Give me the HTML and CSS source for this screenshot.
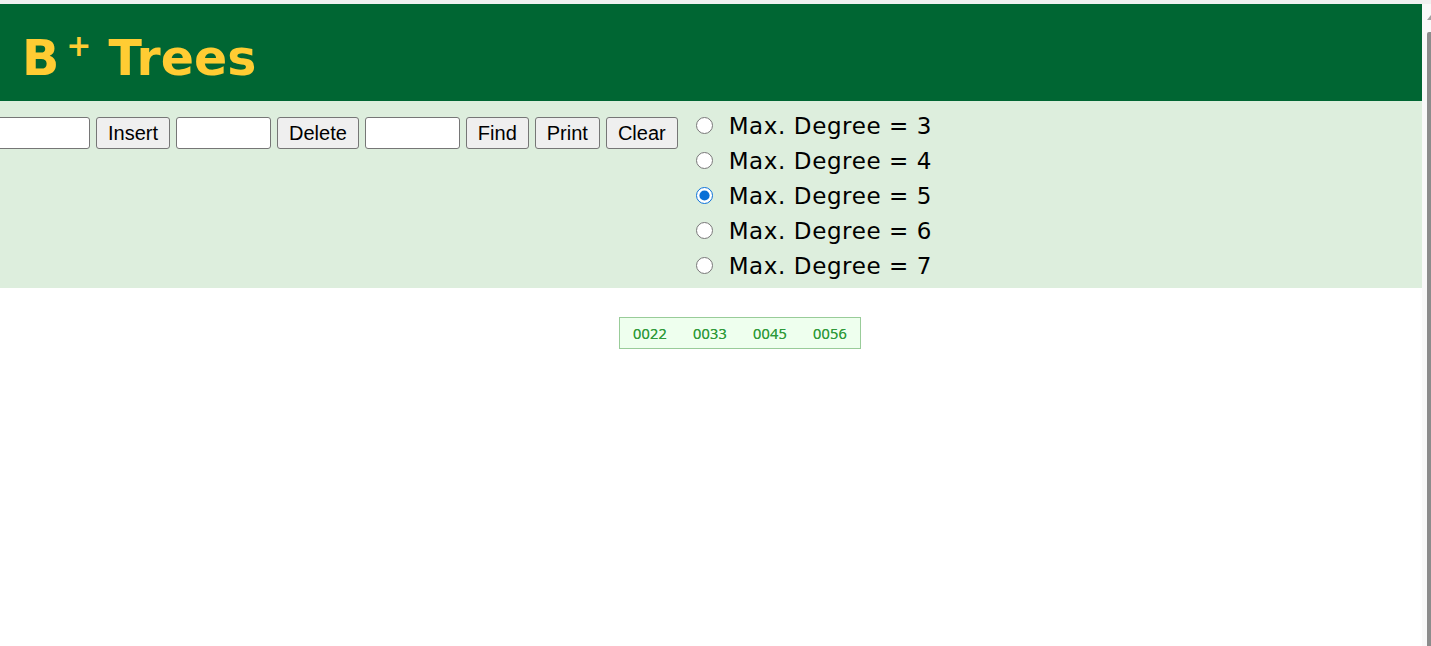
FILE: index.html
```html
<!DOCTYPE html>
<html>
<head>
<meta charset="utf-8">
<title>B+ Trees</title>
<link rel="stylesheet" href="styles.css">
</head>
<body>
<div class="window">
  <div class="topbar"></div>
  <div class="viewport">
    <main class="page">
      <header class="banner">
        <h1 class="title">B<sup class="plus">+</sup> Trees</h1>
      </header>
      <section class="controls">
        <div class="actions">
          <input class="field" type="text">
          <button class="btn">Insert</button>
          <input class="field" type="text">
          <button class="btn">Delete</button>
          <input class="field" type="text">
          <button class="btn">Find</button>
          <button class="btn">Print</button>
          <button class="btn">Clear</button>
        </div>
        <div class="degrees">
          <label class="degree"><input class="radio" type="radio" name="deg"><span>Max. Degree = 3</span></label>
          <label class="degree"><input class="radio" type="radio" name="deg"><span>Max. Degree = 4</span></label>
          <label class="degree"><input class="radio" type="radio" name="deg" checked><span>Max. Degree = 5</span></label>
          <label class="degree"><input class="radio" type="radio" name="deg"><span>Max. Degree = 6</span></label>
          <label class="degree"><input class="radio" type="radio" name="deg"><span>Max. Degree = 7</span></label>
        </div>
      </section>
      <section class="canvas">
        <div class="node">
          <span class="key">0022</span>
          <span class="key">0033</span>
          <span class="key">0045</span>
          <span class="key">0056</span>
        </div>
      </section>
    </main>
    <div class="scrollbar">
      <span class="arrow"></span>
      <span class="thumb"></span>
    </div>
  </div>
</div>
</body>
</html>
```

FILE: styles.css
```css
html, body {
  margin: 0;
  padding: 0;
  background: #ffffff;
  overflow: hidden;
}

.window {
  width: 1431px;
  height: 646px;
  display: flex;
  flex-direction: column;
}

.topbar {
  height: 4px;
  background: #f0f0f0;
  flex: none;
}

.viewport {
  flex: 1;
  display: flex;
  min-height: 0;
}

.page {
  width: 1422px;
  flex: none;
  overflow: hidden;
}

.banner {
  background: #006633;
  height: 97px;
  box-sizing: border-box;
  padding: 29px 0 0 22px;
}

.title {
  margin: 0;
  font-family: "DejaVu Sans", Verdana, sans-serif;
  font-weight: bold;
  font-size: 49px;
  line-height: 52px;
  color: #ffcc33;
}

.plus {
  font-size: 30px;
  line-height: 0;
  vertical-align: 19px;
  margin-left: 7px;
}

.controls {
  background: #ddeedd;
  height: 187px;
  box-sizing: border-box;
  display: flex;
  align-items: flex-start;
  padding-top: 7px;
}

.actions {
  display: flex;
  gap: 6px;
  margin-left: -5px;
  margin-top: 9px;
}

.field {
  width: 95px;
  height: 32px;
  box-sizing: border-box;
  border: 1px solid #767676;
  border-radius: 3px;
  background: #ffffff;
  margin: 0;
  padding: 0 4px;
}

.btn {
  height: 32px;
  box-sizing: border-box;
  margin: 0;
  padding: 0 11px;
  border: 1px solid #767676;
  border-radius: 3px;
  background: #efefef;
  color: #000000;
  font-family: "Liberation Sans", Arial, sans-serif;
  font-size: 20px;
  line-height: 28px;
}

.degrees {
  display: flex;
  flex-direction: column;
  margin-left: 18px;
}

.degree {
  display: flex;
  align-items: center;
  height: 35px;
  font-family: "DejaVu Sans", Verdana, sans-serif;
  font-size: 23px;
  color: #000000;
  letter-spacing: 0.6px;
}

.radio {
  width: 17px;
  height: 17px;
  margin: 0 16px 0 0;
  accent-color: #0a70d6;
}

.canvas {
  padding: 29px 0 0 619px;
}

.node {
  display: inline-flex;
  border: 1px solid #99cc99;
  background: #eeffee;
  height: 32px;
  box-sizing: border-box;
  align-items: center;
}

.key {
  width: 60px;
  text-align: center;
  font-family: "Open Sans", "Liberation Sans", sans-serif;
  font-size: 14.5px;
  color: #2f9a3a;
  letter-spacing: 0.2px;
  text-shadow: 0 0 0.6px #2f9a3a;
}

.scrollbar {
  width: 9px;
  flex: none;
  background: #f9f9f9;
  display: flex;
  flex-direction: column;
  align-items: flex-end;
}

.arrow {
  width: 0;
  height: 0;
  margin-top: 11px;
  border-left: 4px solid transparent;
  border-bottom: 5px solid #a0a0a0;
  flex: none;
}

.thumb {
  width: 4px;
  flex: 1;
  margin-top: 12px;
  background: #8c8c8c;
  border-radius: 2px 0 0 0;
}
```
